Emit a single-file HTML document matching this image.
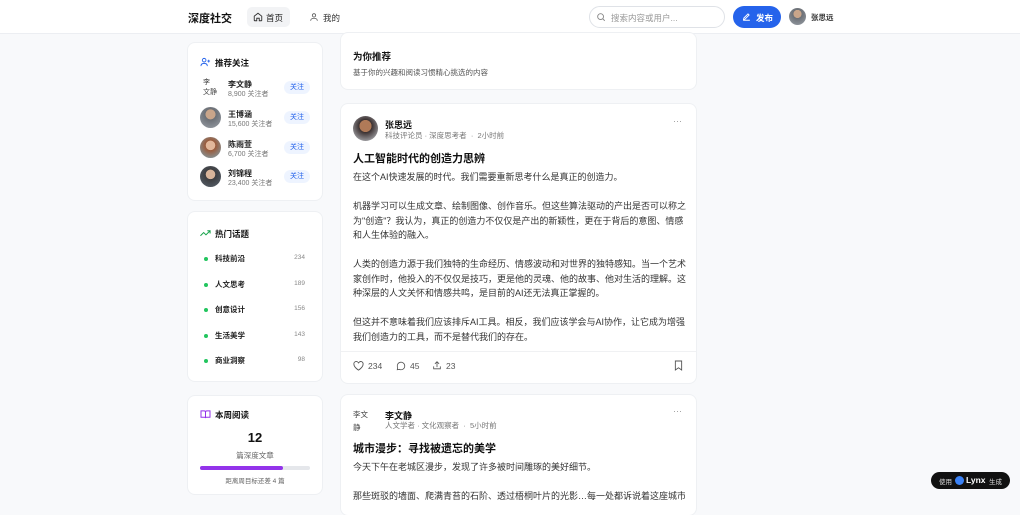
<!DOCTYPE html><html><head><meta charset="utf-8"><style>
*{margin:0;padding:0;box-sizing:border-box}
body{width:1020px;height:500px;overflow:hidden;background:#f8f9fb;font-family:"Liberation Sans","Noto Sans CJK SC",sans-serif;color:#111;position:relative}
.a{position:absolute}
.card{position:absolute;background:#fff;border-radius:7px;box-shadow:0 0 0 1px #eef0f3}
.hdr{position:absolute;left:0;top:0;width:1020px;height:34px;background:#fff;border-bottom:1px solid #eceef2}
.av{position:absolute;border-radius:50%;background:radial-gradient(circle at 50% 35%,#c9a58a 0 28%,#6b6f75 30%,#9aa0a8 100%)}
.fb{position:absolute;left:284px;width:26px;height:13px;border-radius:7px;background:#eef4ff;color:#2563eb;font-size:7px;text-align:center;line-height:13px}
.nm{font-size:8px;font-weight:bold;color:#222}
.sub{font-size:7px;color:#777}
.p{font-size:9px;line-height:14.5px;color:#333}
.tp{position:absolute;left:201px;font-size:7.5px;font-weight:bold;color:#222}
.tp:before{content:"";position:absolute;left:3px;top:4px;width:4px;height:4px;border-radius:50%;background:#22c55e}
.tp span{margin-left:14px}
.tn{position:absolute;right:715px;font-size:6.5px;color:#888}
</style></head><body>
<div class="hdr">
<div class="a" style="left:188px;top:10px;font-size:11px;font-weight:bold">深度社交</div>
<div class="a" style="left:247px;top:7px;width:43px;height:20px;border-radius:5px;background:#f2f3f5"></div>
<svg class="a" style="left:253px;top:12px" width="10" height="10" viewBox="0 0 24 24" fill="none" stroke="#333" stroke-width="2.2"><path d="M3 10l9-7 9 7v10a1 1 0 01-1 1h-5v-6h-6v6H4a1 1 0 01-1-1z"/></svg>
<div class="a" style="left:266px;top:12px;font-size:8.5px;color:#222">首页</div>
<svg class="a" style="left:309px;top:12px" width="10" height="10" viewBox="0 0 24 24" fill="none" stroke="#555" stroke-width="2"><circle cx="12" cy="8" r="4"/><path d="M4 21c0-4 4-6 8-6s8 2 8 6"/></svg>
<div class="a" style="left:323px;top:12px;font-size:8.5px;color:#333">我的</div>
<div class="a" style="left:589px;top:6px;width:136px;height:22px;border-radius:11px;border:1px solid #dfe2e7"></div>
<svg class="a" style="left:596px;top:12px" width="10" height="10" viewBox="0 0 24 24" fill="none" stroke="#888" stroke-width="2.2"><circle cx="11" cy="11" r="7"/><path d="M16 16l5 5"/></svg>
<div class="a" style="left:611px;top:12px;font-size:8.5px;color:#999">搜索内容或用户...</div>
<div class="a" style="left:733px;top:6px;width:48px;height:22px;border-radius:11px;background:#2563eb"></div>
<svg class="a" style="left:742px;top:12px" width="9" height="9" viewBox="0 0 24 24" fill="none" stroke="#fff" stroke-width="2.4"><path d="M4 20l4-1 11-11-3-3L5 16zM3 22h18"/></svg>
<div class="a" style="left:756px;top:12px;font-size:8.5px;color:#fff;font-weight:bold">发布</div>
<div class="av" style="left:789px;top:8px;width:17px;height:17px"></div>
<div class="a" style="left:811px;top:12px;font-size:7.5px;color:#333;font-weight:bold">张思远</div>
</div>

<div class="card" style="left:188px;top:43px;width:134px;height:157px"></div>
<svg class="a" style="left:200px;top:57px" width="11" height="10" viewBox="0 0 24 22" fill="none" stroke="#2563eb" stroke-width="2"><circle cx="9" cy="7" r="4"/><path d="M2 20c0-4 3-6 7-6s7 2 7 6M19 6v6M16 9h6"/></svg>
<div class="a" style="left:215px;top:57px;font-size:8.5px;font-weight:bold">推荐关注</div>
<div class="a" style="left:203px;top:78px;font-size:7px;color:#444;line-height:10px;width:20px">李<br>文静</div>
<div class="a nm" style="left:228px;top:79px">李文静</div><div class="a sub" style="left:228px;top:89px">8,900 关注者</div><div class="fb" style="top:81px">关注</div>
<div class="av" style="left:200px;top:107px;width:21px;height:21px"></div>
<div class="a nm" style="left:228px;top:109px">王博涵</div><div class="a sub" style="left:228px;top:119px">15,600 关注者</div><div class="fb" style="top:111px">关注</div>
<div class="av" style="left:200px;top:137px;width:21px;height:21px;background:radial-gradient(circle at 50% 40%,#e2b79a 0 28%,#9a5a3a 30%,#7fa8b8 100%)"></div>
<div class="a nm" style="left:228px;top:139px">陈雨萱</div><div class="a sub" style="left:228px;top:149px">6,700 关注者</div><div class="fb" style="top:141px">关注</div>
<div class="av" style="left:200px;top:166px;width:21px;height:21px;background:radial-gradient(circle at 50% 40%,#d8b49a 0 28%,#3d3d40 30%,#5a6570 100%)"></div>
<div class="a nm" style="left:228px;top:168px">刘锦程</div><div class="a sub" style="left:228px;top:178px">23,400 关注者</div><div class="fb" style="top:170px">关注</div>

<div class="card" style="left:188px;top:212px;width:134px;height:169px"></div>
<svg class="a" style="left:200px;top:229px" width="11" height="8" viewBox="0 0 24 16" fill="none" stroke="#16a34a" stroke-width="2.2"><path d="M1 14l7-7 5 5 9-9M16 3h6v6"/></svg>
<div class="a" style="left:215px;top:228px;font-size:8.5px;font-weight:bold">热门话题</div>
<div class="tp" style="top:253px"><span>科技前沿</span></div><div class="tn" style="top:254px">234</div>
<div class="tp" style="top:279px"><span>人文思考</span></div><div class="tn" style="top:280px">189</div>
<div class="tp" style="top:304px"><span>创意设计</span></div><div class="tn" style="top:305px">156</div>
<div class="tp" style="top:330px"><span>生活美学</span></div><div class="tn" style="top:331px">143</div>
<div class="tp" style="top:355px"><span>商业洞察</span></div><div class="tn" style="top:356px">98</div>

<div class="card" style="left:188px;top:396px;width:134px;height:98px"></div>
<svg class="a" style="left:200px;top:410px" width="11" height="9" viewBox="0 0 24 20" fill="none" stroke="#9333ea" stroke-width="2.2"><path d="M2 2h7a3 3 0 013 3v13a2 2 0 00-2-2H2zM22 2h-7a3 3 0 00-3 3v13a2 2 0 012-2h8z"/></svg>
<div class="a" style="left:215px;top:409px;font-size:8.5px;font-weight:bold">本周阅读</div>
<div class="a" style="left:188px;top:430px;width:134px;text-align:center;font-size:13px;font-weight:bold">12</div>
<div class="a" style="left:188px;top:450px;width:134px;text-align:center;font-size:7.5px;color:#666">篇深度文章</div>
<div class="a" style="left:200px;top:466px;width:110px;height:4px;border-radius:2px;background:#e5e7eb"><div style="width:75%;height:4px;border-radius:2px;background:#9333ea"></div></div>
<div class="a" style="left:188px;top:475px;width:134px;text-align:center;font-size:6.5px;color:#666">距离周目标还差 4 篇</div>

<div class="card" style="left:341px;top:33px;width:355px;height:56px"></div>
<div class="a" style="left:353px;top:49px;font-size:9.5px;font-weight:bold">为你推荐</div>
<div class="a" style="left:353px;top:67px;font-size:7.5px;color:#555">基于你的兴趣和阅读习惯精心挑选的内容</div>

<div class="card" style="left:341px;top:104px;width:355px;height:279px"></div>
<div class="av" style="left:353px;top:116px;width:25px;height:25px;background:radial-gradient(circle at 50% 40%,#b07a58 0 30%,#3a3030 32%,#c8ccd2 100%)"></div>
<div class="a" style="left:385px;top:118px;font-size:9px;font-weight:bold">张思远</div>
<div class="a" style="left:385px;top:130px;font-size:7.5px;color:#777">科技评论员 · 深度思考者 &nbsp;·&nbsp; 2小时前</div>
<div class="a" style="left:673px;top:116px;font-size:9px;color:#999">···</div>
<div class="a" style="left:353px;top:150px;font-size:11px;font-weight:bold">人工智能时代的创造力思辨</div>
<div class="a p" style="left:353px;top:170px;width:334px">在这个AI快速发展的时代。我们需要重新思考什么是真正的创造力。<br><br>机器学习可以生成文章、绘制图像、创作音乐。但这些算法驱动的产出是否可以称之为"创造"？我认为，真正的创造力不仅仅是产出的新颖性，更在于背后的意图、情感和人生体验的融入。<br><br>人类的创造力源于我们独特的生命经历、情感波动和对世界的独特感知。当一个艺术家创作时，他投入的不仅仅是技巧，更是他的灵魂、他的故事、他对生活的理解。这种深层的人文关怀和情感共鸣，是目前的AI还无法真正掌握的。<br><br>但这并不意味着我们应该排斥AI工具。相反，我们应该学会与AI协作，让它成为增强我们创造力的工具，而不是替代我们的存在。</div>
<div class="a" style="left:341px;top:351px;width:355px;height:1px;background:#f0f1f3"></div>
<svg class="a" style="left:353px;top:361px" width="11" height="10" viewBox="0 0 24 22" fill="none" stroke="#555" stroke-width="2"><path d="M12 20S2 14 2 7.5A5 5 0 0112 5a5 5 0 0110 2.5C22 14 12 20 12 20z"/></svg>
<div class="a" style="left:368px;top:361px;font-size:8.5px;color:#555">234</div>
<svg class="a" style="left:396px;top:361px" width="10" height="10" viewBox="0 0 24 24" fill="none" stroke="#555" stroke-width="2"><path d="M21 12a9 9 0 01-13 8l-5 1 1-5a9 9 0 1117-4z"/></svg>
<div class="a" style="left:410px;top:361px;font-size:8.5px;color:#555">45</div>
<svg class="a" style="left:432px;top:360px" width="10" height="11" viewBox="0 0 24 24" fill="none" stroke="#555" stroke-width="2"><path d="M12 3v13M7 8l5-5 5 5M4 14v6h16v-6"/></svg>
<div class="a" style="left:446px;top:361px;font-size:8.5px;color:#555">23</div>
<svg class="a" style="left:674px;top:360px" width="9" height="11" viewBox="0 0 20 24" fill="none" stroke="#555" stroke-width="2"><path d="M3 2h14v20l-7-5-7 5z"/></svg>

<div class="card" style="left:341px;top:395px;width:355px;height:120px"></div>
<div class="a" style="left:353px;top:408px;font-size:7.5px;color:#444;line-height:13px;width:28px">李文<br>静</div>
<div class="a" style="left:385px;top:409px;font-size:9px;font-weight:bold">李文静</div>
<div class="a" style="left:385px;top:420px;font-size:7.5px;color:#777">人文学者 · 文化观察者 &nbsp;·&nbsp; 5小时前</div>
<div class="a" style="left:673px;top:406px;font-size:9px;color:#999">···</div>
<div class="a" style="left:353px;top:440px;font-size:11px;font-weight:bold">城市漫步：寻找被遗忘的美学</div>
<div class="a p" style="left:353px;top:460px;width:332px;white-space:nowrap;overflow:hidden">今天下午在老城区漫步，发现了许多被时间雕琢的美好细节。<br><br>那些斑驳的墙面、爬满青苔的石阶、透过梧桐叶片的光影…每一处都诉说着这座城市的历</div>

<div class="a" style="left:931px;top:472px;width:79px;height:17px;border-radius:9px;background:#111"></div>
<div class="a" style="left:939px;top:476px;font-size:6.5px;color:#ddd">使用</div>
<div class="a" style="left:955px;top:476px;width:9px;height:9px;border-radius:50%;background:#3b82f6"></div>
<div class="a" style="left:966px;top:475px;font-size:8.5px;color:#fff;font-weight:bold">Lynx</div>
<div class="a" style="left:989px;top:476px;font-size:6.5px;color:#ddd">生成</div>
</body></html>
